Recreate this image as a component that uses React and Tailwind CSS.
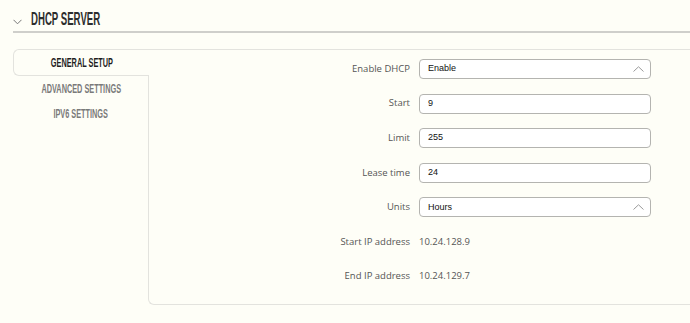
import React from 'react';

const fields = [
  { label: 'Enable DHCP', value: 'Enable', type: 'select' },
  { label: 'Start', value: '9', type: 'input' },
  { label: 'Limit', value: '255', type: 'input' },
  { label: 'Lease time', value: '24', type: 'input' },
  { label: 'Units', value: 'Hours', type: 'select' },
  { label: 'Start IP address', value: '10.24.128.9', type: 'text' },
  { label: 'End IP address', value: '10.24.129.7', type: 'text' },
];

const tabs = ['GENERAL SETUP', 'ADVANCED SETTINGS', 'IPV6 SETTINGS'];

const ChevronUp = () => (
  <svg width="11" height="6" viewBox="0 0 11 6" fill="none" className="shrink-0">
    <path d="M0.5 5.5L5.5 0.8L10.5 5.5" stroke="#9a9a9a" strokeWidth="1" />
  </svg>
);

const Field = ({ label, value, type }) => (
  <div className="flex items-center h-[20px]">
    <div className="w-[270px] pr-[9px] text-right text-[9.5px] text-[#555] font-['Open_Sans',sans-serif]">
      {label}
    </div>
    {type === 'text' ? (
      <div className="text-[9.5px] text-[#555] font-['Open_Sans',sans-serif]">{value}</div>
    ) : (
      <div className="w-[232px] h-[20px] flex items-center justify-between pl-[8px] pr-[6px] border border-[#b4b4b0] rounded-[4px] bg-white text-[9px] text-[#111] font-['Liberation_Sans',Arial,sans-serif]">
        <span>{value}</span>
        {type === 'select' && <ChevronUp />}
      </div>
    )}
  </div>
);

export default function App() {
  return (
    <div className="w-[690px] h-[323px] overflow-hidden bg-[#fefef7]">
      <div className="pl-[13px] pt-[11px]">
        <div className="flex items-center h-[22px] border-b-2 border-[#cfcfcb]">
          <svg width="9" height="6" viewBox="0 0 9 6" fill="none" className="mt-[1px]">
            <path d="M0.5 0.8L4.5 4.8L8.5 0.8" stroke="#777" strokeWidth="1" />
          </svg>
          <h2 className="ml-[9px] pb-[2px] text-[17.5px] leading-none font-bold text-[#2d2d2d] font-['Liberation_Sans',sans-serif] [transform:scaleX(0.55)] origin-left whitespace-nowrap">
            DHCP SERVER
          </h2>
        </div>

        <div className="flex mt-[16px]">
          <div className="w-[136px] -mr-px relative z-10 flex flex-col font-['Liberation_Sans',sans-serif]">
            {tabs.map((t, i) => (
              <div
                key={t}
                className={
                  i === 0
                    ? 'h-[27px] flex items-center justify-center border-t border-l border-b border-[#e3e3de] rounded-l-[6px] bg-[#fefef7] text-[12px] font-bold text-[#1e1e1e]'
                    : 'h-[25px] flex items-center justify-center text-[12px] font-bold text-[#7a7a7a]'
                }
              >
                <span className="inline-block [transform:scaleX(0.61)] whitespace-nowrap">{t}</span>
              </div>
            ))}
          </div>
          <div className="flex-1 h-[256px] border-t border-l border-b border-[#e3e3de] rounded-bl-[6px] pt-[9px] flex flex-col gap-[14.6px]">
            {fields.map((f) => (
              <Field key={f.label} {...f} />
            ))}
          </div>
        </div>
      </div>
    </div>
  );
}
